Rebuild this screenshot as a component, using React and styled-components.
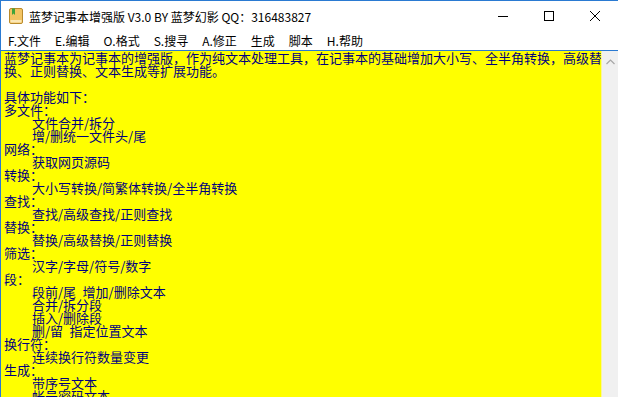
import React from 'react'
import styled, { createGlobalStyle } from 'styled-components'

const GlobalStyle = createGlobalStyle`
  html, body {
    margin: 0;
    padding: 0;
    overflow: hidden;
    background: #ffffff;
  }
`

const sections = [
  { label: '多文件：', items: ['文件合并/拆分', '增/删统一文件头/尾'] },
  { label: '网络：', items: ['获取网页源码'] },
  { label: '转换：', items: ['大小写转换/简繁体转换/全半角转换'] },
  { label: '查找：', items: ['查找/高级查找/正则查找'] },
  { label: '替换：', items: ['替换/高级替换/正则替换'] },
  { label: '筛选：', items: ['汉字/字母/符号/数字'] },
  { label: '段：', items: ['段前/尾\u2002增加/删除文本', '合并/拆分段', '插入/删除段', '删/留\u2002指定位置文本'] },
  { label: '换行符：', items: ['连续换行符数量变更'] },
  { label: '生成：', items: ['带序号文本', '帐号密码文本'] },
]

const menus = ['F.文件', 'E.编辑', 'O.格式', 'S.搜寻', 'A.修正', '生成', '脚本', 'H.帮助']

const BookIcon = () => (
  <svg width="16" height="16" viewBox="0 0 16 16">
    <rect x="1.5" y="0.5" width="13" height="15" rx="1.5" fill="#f3c463" stroke="#b98a2c" />
    <rect x="2.5" y="12" width="11" height="2.5" fill="#fbe7b5" />
    <path d="M4 0.5 V7 L5.5 5.6 L7 7 V0.5 Z" fill="#3fa33a" />
  </svg>
)

const App = () => {
  return (
    <>
      <GlobalStyle />
      <Window>
        <TitleBar>
          <AppIcon>
            <BookIcon />
          </AppIcon>
          <Title>蓝梦记事本增强版 V3.0 BY 蓝梦幻影 QQ：316483827</Title>
          <Controls>
            <ControlButton>
              <svg width="10" height="10" viewBox="0 0 10 10">
                <path d="M0 5.5 H10" stroke="#000" strokeWidth="1" />
              </svg>
            </ControlButton>
            <ControlButton>
              <svg width="10" height="10" viewBox="0 0 10 10">
                <rect x="0.5" y="0.5" width="9" height="9" fill="none" stroke="#000" strokeWidth="1" />
              </svg>
            </ControlButton>
            <ControlButton>
              <svg width="10" height="10" viewBox="0 0 10 10">
                <path d="M0 0 L10 10 M10 0 L0 10" stroke="#000" strokeWidth="1" />
              </svg>
            </ControlButton>
          </Controls>
        </TitleBar>
        <MenuBar>
          {menus.map((m) => (
            <MenuItem key={m}>{m}</MenuItem>
          ))}
        </MenuBar>
        <Editor>
          <TextArea>
            <Line>蓝梦记事本为记事本的增强版，作为纯文本处理工具，在记事本的基础增加大小写、全半角转换，高级替</Line>
            <Line>换、正则替换、文本生成等扩展功能。</Line>
            <Line>&nbsp;</Line>
            <Line>具体功能如下：</Line>
            {sections.map((s) => (
              <React.Fragment key={s.label}>
                <Line>{s.label}</Line>
                {s.items.map((it) => (
                  <Line key={it} indent>{it}</Line>
                ))}
              </React.Fragment>
            ))}
          </TextArea>
          <ScrollBar>
            <svg width="9" height="6" viewBox="0 0 9 6">
              <path d="M0.5 5 L4.5 1 L8.5 5" fill="none" stroke="#a6a6a6" strokeWidth="1.2" />
            </svg>
          </ScrollBar>
        </Editor>
      </Window>
    </>
  )
}

export default App

const Window = styled.div`
  width: 618px;
  height: 397px;
  box-sizing: border-box;
  border-top: 1px solid #2a7ad2;
  border-left: 1px solid #2a7ad2;
  display: flex;
  flex-direction: column;
  overflow: hidden;
  background: #ffffff;
`

const TitleBar = styled.div`
  height: 30px;
  flex: none;
  display: flex;
  align-items: center;
  background: #ffffff;
`

const AppIcon = styled.div`
  width: 16px;
  height: 16px;
  margin: 0 5px 0 7px;
  display: flex;
`

const Title = styled.div`
  flex: 1;
  font-family: "Noto Sans CJK SC", "Noto Sans", sans-serif;
  font-size: 12px;
  color: #000000;
  white-space: nowrap;
  padding-top: 1px;
`

const Controls = styled.div`
  display: flex;
  height: 100%;
`

const ControlButton = styled.div`
  width: 46px;
  height: 30px;
  display: flex;
  align-items: center;
  justify-content: center;
`

const MenuBar = styled.div`
  height: 19px;
  flex: none;
  display: flex;
  align-items: center;
  background: #ffffff;
  border-bottom: 1px solid #2a7ad2;
`

const MenuItem = styled.div`
  padding: 0 7px;
  font-family: "Noto Sans CJK SC", "Noto Sans", sans-serif;
  font-size: 12px;
  color: #000000;
  white-space: nowrap;
`

const Editor = styled.div`
  flex: 1;
  display: flex;
  min-height: 0;
`

const TextArea = styled.div`
  width: 601px;
  flex: none;
  background: #ffff00;
  padding-left: 3px;
  box-sizing: border-box;
  border-right: 1px solid #fbf59a;
  overflow: hidden;
`

const Line = styled.div`
  height: 13px;
  line-height: 13px;
  font-family: "Noto Sans CJK SC", sans-serif;
  font-size: 13px;
  color: #00007f;
  white-space: pre;
  padding-left: ${(p) => (p.indent ? '28px' : '0')};
`

const ScrollBar = styled.div`
  width: 17px;
  flex: none;
  background: #f0f0f0;
  display: flex;
  justify-content: center;
  padding-top: 8px;
  box-sizing: border-box;
`
